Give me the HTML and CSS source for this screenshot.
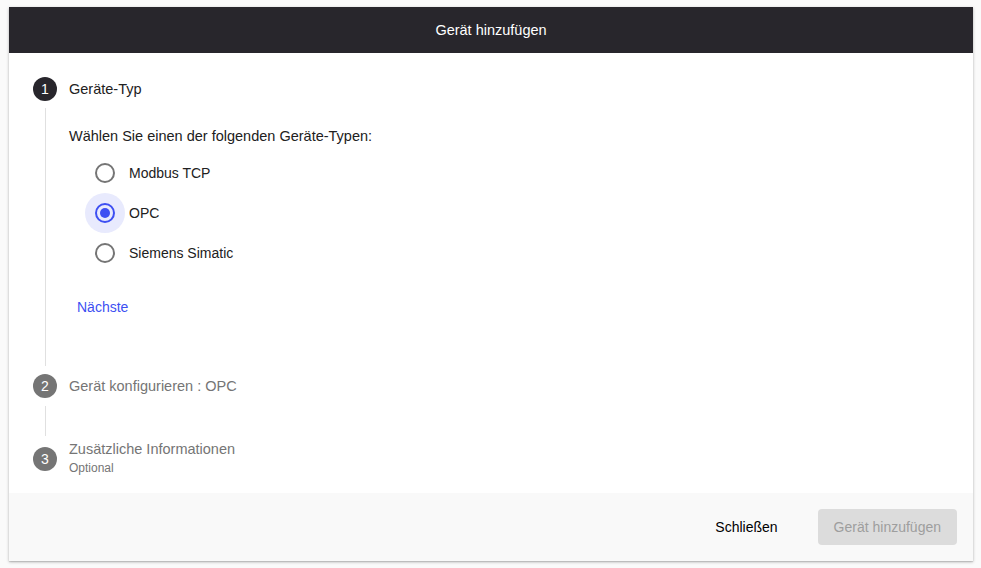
FILE: index.html
```html
<!DOCTYPE html>
<html lang="de">
<head>
    <meta charset="UTF-8">
    <meta name="viewport" content="width=device-width, initial-scale=1.0">
    <title>Gerät hinzufügen</title>
    <link rel="stylesheet" href="styles.css">
</head>
<body>
    <div class="dialog">
        <header class="dialog-title">Gerät hinzufügen</header>

        <div class="dialog-body">
            <!-- Schritt 1 -->
            <div class="step">
                <div class="step-header">
                    <span class="step-icon active">1</span>
                    <span class="step-label active">Geräte-Typ</span>
                </div>
                <div class="step-content">
                    <p class="step-text">Wählen Sie einen der folgenden Geräte-Typen:</p>
                    <div class="radio-group">
                        <label class="radio">
                            <span class="radio-ring"><span class="radio-circle"></span></span>
                            <span>Modbus TCP</span>
                        </label>
                        <label class="radio checked">
                            <span class="radio-ring"><span class="radio-circle"></span></span>
                            <span>OPC</span>
                        </label>
                        <label class="radio">
                            <span class="radio-ring"><span class="radio-circle"></span></span>
                            <span>Siemens Simatic</span>
                        </label>
                    </div>
                    <button class="next-button">Nächste</button>
                </div>
            </div>

            <!-- Schritt 2 -->
            <div class="step">
                <div class="step-header">
                    <span class="step-icon">2</span>
                    <span class="step-label">Gerät konfigurieren : OPC</span>
                </div>
                <div class="step-line"></div>
            </div>

            <!-- Schritt 3 -->
            <div class="step">
                <div class="step-header">
                    <span class="step-icon">3</span>
                    <span class="step-label">
                        Zusätzliche Informationen
                        <small class="step-optional">Optional</small>
                    </span>
                </div>
            </div>
        </div>

        <footer class="dialog-actions">
            <button class="text-button">Schließen</button>
            <button class="flat-button" disabled>Gerät hinzufügen</button>
        </footer>
    </div>
</body>
</html>
```

FILE: styles.css
```css
:root {
    --header-dark: #28262c;
    --primary: #3d4ff2;
    --primary-light: #e8eafd;
    --text-main: #212121;
    --text-muted: #757575;
    --line: #e0e0e0;
}

* {
    box-sizing: border-box;
}

body {
    margin: 0;
    padding: 7px 8px 7px 9px;
    background-color: #fafafa;
    font-family: 'Liberation Sans', Arial, sans-serif;
    font-size: 14px;
    color: var(--text-main);
}

.dialog {
    background: #fff;
    box-shadow: 0 1px 3px rgba(0, 0, 0, 0.25), 0 1px 1px rgba(0, 0, 0, 0.1);
}

.dialog-title {
    height: 46px;
    display: flex;
    align-items: center;
    justify-content: center;
    background-color: var(--header-dark);
    color: #fff;
    font-size: 14.5px;
}

.dialog-body {
    height: 440px;
    padding: 24px 24px 0 24px;
    overflow: hidden;
}

.step-header {
    display: flex;
    align-items: center;
    gap: 12px;
}

.step-icon {
    width: 24px;
    height: 24px;
    border-radius: 50%;
    background-color: var(--text-muted);
    color: #fff;
    display: flex;
    align-items: center;
    justify-content: center;
    flex-shrink: 0;
}

.step-icon.active {
    background-color: var(--header-dark);
}

.step-label {
    color: var(--text-muted);
    font-size: 14.5px;
    line-height: 20px;
}

.step-label.active {
    color: var(--text-main);
}

.step-optional {
    display: block;
    font-size: 12px;
    line-height: 19px;
}

.step-content {
    margin: 7px 0 8px 12px;
    padding: 18px 0 41px 23px;
    border-left: 1px solid var(--line);
}

.step-text {
    margin: 0 0 7px 0;
    font-size: 14.5px;
    line-height: 20px;
}

.radio-group {
    display: flex;
    flex-direction: column;
    margin-left: 16px;
}

.radio {
    display: flex;
    align-items: center;
    height: 40px;
    gap: 4px;
    cursor: pointer;
}

.radio-ring {
    width: 40px;
    height: 40px;
    border-radius: 50%;
    display: flex;
    align-items: center;
    justify-content: center;
}

.radio-circle {
    width: 20px;
    height: 20px;
    border-radius: 50%;
    border: 2px solid var(--text-muted);
    display: flex;
    align-items: center;
    justify-content: center;
}

.radio.checked .radio-ring {
    background-color: var(--primary-light);
}

.radio.checked .radio-circle {
    border-color: var(--primary);
}

.radio.checked .radio-circle::after {
    content: '';
    width: 10px;
    height: 10px;
    border-radius: 50%;
    background-color: var(--primary);
}

.next-button {
    margin-top: 16px;
    height: 36px;
    padding: 0 8px;
    border: none;
    background: none;
    font-family: inherit;
    font-size: 14px;
    color: var(--primary);
    cursor: pointer;
}

.step-line {
    width: 1px;
    height: 30px;
    margin: 8px 0 3px 12px;
    background-color: var(--line);
}

.dialog-actions {
    height: 68px;
    display: flex;
    align-items: center;
    justify-content: flex-end;
    gap: 24px;
    padding: 0 16px;
    background-color: #f9f9f9;
}

.text-button,
.flat-button {
    height: 36px;
    padding: 0 16px;
    border: none;
    border-radius: 4px;
    font-family: inherit;
    font-size: 14px;
    background: none;
    color: #000;
    cursor: pointer;
}

.flat-button:disabled {
    background-color: #dcdcdc;
    color: #9e9e9e;
    cursor: default;
}
```
